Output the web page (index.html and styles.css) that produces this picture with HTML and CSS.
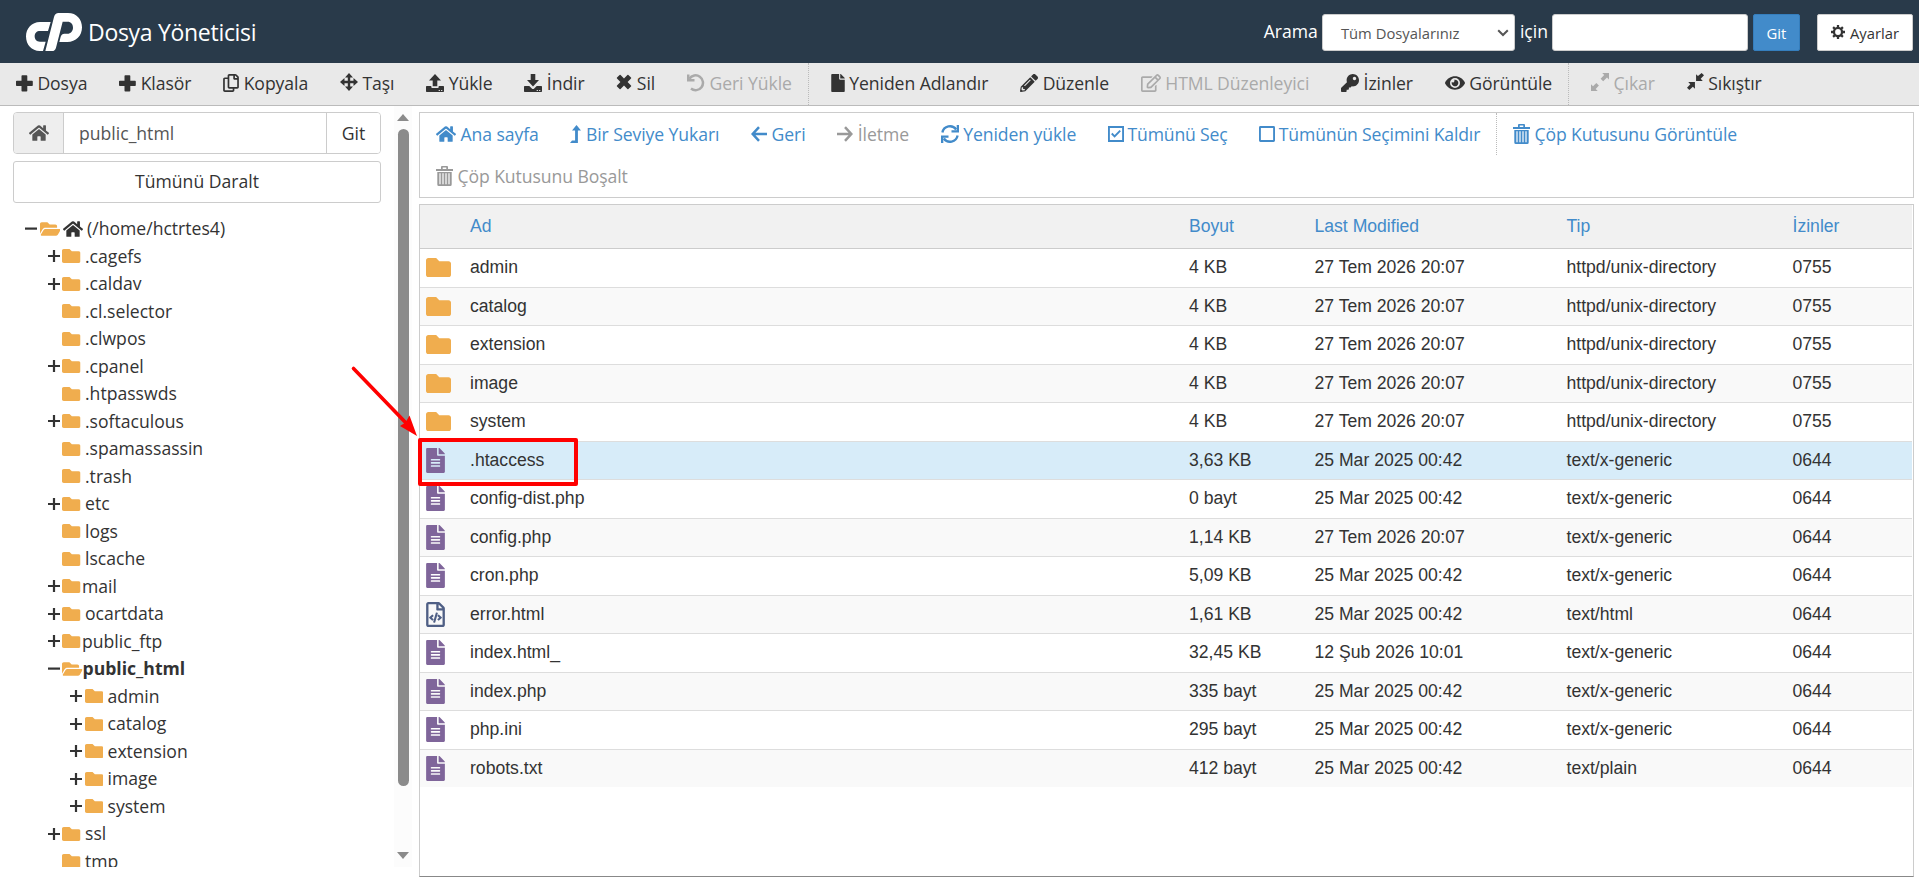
FILE: index.html
```html
<!DOCTYPE html>
<html lang="tr">
<head>
    <meta charset="UTF-8">
    <meta name="viewport" content="width=device-width, initial-scale=1.0">
    <title>Dosya Yöneticisi</title>
    <link rel="stylesheet" href="styles.css">
</head>
<body>

    <!-- Icon set -->
    <svg class="icon-set" width="0" height="0">
        <symbol id="plus" viewBox="0 0 17 17"><path d="M5.5 1q0-.8.8-.8h4.200q.8 0 .8.8v4.700h4.700q.8 0 .8.8v3.700q0 .8-.8.8h-4.700v4.700q0 .8-.8.8H6.300q-.8 0-.8-.8V11H.8q-.8 0-.8-.8V6.500q0-.8.8-.8h4.700z"/></symbol>
        <symbol id="copy" viewBox="0 0 448 512"><path d="M433.941 65.941l-51.882-51.882A48 48 0 0 0 348.118 0H176c-26.51 0-48 21.49-48 48v48H48c-26.51 0-48 21.49-48 48v320c0 26.51 21.49 48 48 48h224c26.51 0 48-21.49 48-48v-48h80c26.51 0 48-21.49 48-48V99.882a48 48 0 0 0-14.059-33.941zM266 464H54a6 6 0 0 1-6-6V150a6 6 0 0 1 6-6h74v224c0 26.510 21.490 48 48 48h96v42a6 6 0 0 1-6 6zm128-96H182a6 6 0 0 1-6-6V54a6 6 0 0 1 6-6h106v88c0 13.255 10.745 24 24 24h88v202a6 6 0 0 1-6 6zm6-256h-64V48h9.632c1.591 0 3.117.632 4.243 1.757l48.368 48.368a6 6 0 0 1 1.757 4.243V112z"/></symbol>
        <symbol id="move" viewBox="0 0 18 18"><path d="M9 0l4 4.500h-2.800v3.300h3.300V5L18 9l-4.500 4v-2.800h-3.300v3.300H13L9 18l-4-4.500h2.800v-3.300H4.500V13L0 9l4.500-4v2.800h3.300V4.500H5z"/></symbol>
        <symbol id="upload" viewBox="0 0 18 18"><path d="M9 0l6 6.500h-3.700v5.800H6.700V6.500H3zM.7 12h4.600v1q0 1 1 1h5.400q1 0 1-1v-1h4.600q.7 0 .7.7v4.600q0 .7-.7.7H.7q-.7 0-.7-.7v-4.600q0-.7.7-.7zm12 4v1.100h1.200V16zm2.400 0v1.100h1.200V16z" fill-rule="evenodd"/></symbol>
        <symbol id="download" viewBox="0 0 18 18"><path d="M6.700 0h4.600v6H15l-6 6.500L3 6h3.700zM.7 12h4.600l2.500 2.500q1.200 1 2.400 0l2.500-2.500h4.600q.7 0 .7.7v4.600q0 .7-.7.7H.7q-.7 0-.7-.7v-4.600q0-.7.7-.7zm12 4v1.100h1.200V16zm2.400 0v1.100h1.200V16z" fill-rule="evenodd"/></symbol>
        <symbol id="times" viewBox="0 0 16 16"><path d="M1 3.600L3.600 1q.5-.5 1 0L8 4.400 11.400 1q.5-.5 1 0L15 3.600q.5.500 0 1L11.600 8l3.400 3.400q.5.500 0 1L12.400 15q-.5.500-1 0L8 11.600 4.600 15q-.5.500-1 0L1 12.400q-.5-.5 0-1L4.400 8 1 4.600q-.5-.5 0-1z"/></symbol>
        <symbol id="undo" viewBox="0 0 18 18"><path d="M2.400 4.700A7.400 7.400 0 1 1 4 14.600" fill="none" stroke="currentColor" stroke-width="2.500"/><path d="M0 .5h2.500V5h5v2.500H0z"/></symbol>
        <symbol id="file" viewBox="0 0 384 512"><path d="M224 136V0H24C10.700 0 0 10.700 0 24v464c0 13.300 10.700 24 24 24h336c13.300 0 24-10.700 24-24V160H248c-13.200 0-24-10.800-24-24zm160-14.100v6.100H256V0h6.100c6.400 0 12.500 2.500 17 7l97.900 98c4.500 4.500 7 10.600 7 16.900z"/></symbol>
        <symbol id="pencil" viewBox="0 0 512 512"><path d="M497.900 142.100l-46.100 46.100c-4.700 4.700-12.300 4.700-17 0l-111-111c-4.700-4.700-4.700-12.300 0-17l46.100-46.100c18.700-18.700 49.100-18.700 67.900 0l60.100 60.100c18.800 18.700 18.800 49.100 0 67.900zM284.200 99.800L21.600 362.400.4 483.900c-2.900 16.400 11.400 30.600 27.800 27.800l121.500-21.300 262.600-262.600c4.700-4.700 4.700-12.300 0-17l-111-111c-4.800-4.700-12.400-4.700-17.100 0zM124.100 339.900c-5.500-5.500-5.500-14.300 0-19.800l154-154c5.500-5.500 14.300-5.500 19.800 0s5.500 14.300 0 19.800l-154 154c-5.500 5.500-14.300 5.500-19.800 0zM88 424h48v36.300l-64.500 11.300-31.100-31.100L51.700 376H88v48z"/></symbol>
        <symbol id="edit" viewBox="0 0 576 512"><path d="M402.300 344.900l32-32c5-5 13.700-1.500 13.700 5.700V464c0 26.500-21.500 48-48 48H48c-26.500 0-48-21.500-48-48V112c0-26.500 21.500-48 48-48h273.500c7.100 0 10.700 8.600 5.700 13.700l-32 32c-1.500 1.500-3.500 2.300-5.700 2.300H48v352h352V350.500c0-2.100.8-4.100 2.300-5.600zm156.600-201.800L296.300 405.700l-90.400 10c-26.200 2.900-48.500-19.200-45.600-45.600l10-90.400L432.900 17.100c22.900-22.900 59.900-22.900 82.700 0l43.200 43.200c22.900 22.900 22.900 60 .1 82.800zM460.100 174L402 115.900 216.200 301.800l-7.300 65.300 65.300-7.300L460.100 174zm64.800-79.700l-43.200-43.200c-4.100-4.100-10.800-4.100-14.800 0L436 82l58.100 58.100 30.900-30.900c4-4.200 4-10.800-.1-14.900z"/></symbol>
        <symbol id="key" viewBox="0 0 512 512"><path d="M512 176C512 273.200 433.200 352 336 352c-11.200 0-22.200-1-32.800-3l-24 27a24 24 0 0 1-18 8H224v40c0 13.300-10.700 24-24 24h-40v40c0 13.300-10.700 24-24 24H24c-13.300 0-24-10.700-24-24v-78c0-6.400 2.500-12.500 7-17l161.800-161.800C163.100 213.800 160 195.300 160 176 160 78.800 238.800 0 336 0c97.500 0 176 78.500 176 176zM336 128c0 26.500 21.500 48 48 48s48-21.500 48-48-21.500-48-48-48-48 21.500-48 48z"/></symbol>
        <symbol id="eye" viewBox="0 0 576 512"><path d="M572.520 241.400C518.290 135.590 410.930 64 288 64S57.680 135.640 3.480 241.410a32.350 32.350 0 0 0 0 29.190C57.710 376.410 165.070 448 288 448s230.320-71.640 284.520-177.410a32.350 32.350 0 0 0 0-29.190zM288 400a144 144 0 1 1 144-144 143.930 143.930 0 0 1-144 144zm0-240a95.310 95.310 0 0 0-25.310 3.790 47.850 47.850 0 0 1-66.900 66.900A95.780 95.780 0 1 0 288 160z"/></symbol>
        <symbol id="expand" viewBox="0 0 18 18"><path d="M11.200 0H18v6.500l-2-2-3.800 3.700-2.600-2.500L13.200 2zM0 11.300l2 2L5.300 10l2.600 2.600L4.700 16l2 2H0z"/></symbol>
        <symbol id="compress" viewBox="0 0 18 18"><path d="M9.600 1.300l2 2L15.500 0 18 2.500l-3.500 3.500 2.200 2.400H9.600zM1.300 9.600h7.100v7.100l-2.200-2.200L2.500 18 0 15.500l3.500-3.700z"/></symbol>
        <symbol id="home" viewBox="0 0 576 512"><path d="M280.370 148.260L96 300.110V464a16 16 0 0 0 16 16l112.060-.29a16 16 0 0 0 15.920-16V368a16 16 0 0 1 16-16h64a16 16 0 0 1 16 16v95.640a16 16 0 0 0 16 16.050L464 480a16 16 0 0 0 16-16V300L295.670 148.260a12.190 12.190 0 0 0-15.300 0zM571.600 251.470L488 182.560V44.050a12 12 0 0 0-12-12h-56a12 12 0 0 0-12 12v72.610L318.470 43a48 48 0 0 0-61 0L4.340 251.470a12 12 0 0 0-1.600 16.900l25.500 31A12 12 0 0 0 45.150 301l235.220-193.740a12.190 12.190 0 0 1 15.300 0L530.900 301a12 12 0 0 0 16.900-1.600l25.500-31a12 12 0 0 0-1.700-16.930z"/></symbol>
        <symbol id="up" viewBox="0 0 11 18"><path d="M6.500 0L11 5.600H7.900V18H0l2-2.600h3.100V5.600H2z"/></symbol>
        <symbol id="left" viewBox="0 0 16 16"><path d="M8 1.200L1.700 8 8 14.800M2 8h14" fill="none" stroke="currentColor" stroke-width="2.500"/></symbol>
        <symbol id="right" viewBox="0 0 16 16"><path d="M8 1.200L14.300 8 8 14.800M14 8H0" fill="none" stroke="currentColor" stroke-width="2.500"/></symbol>
        <symbol id="sync" viewBox="0 0 18 18"><path d="M1.400 7.500a7.700 7.700 0 0 1 13.800-3M16.600 10.500a7.700 7.700 0 0 1-13.800 3" fill="none" stroke="currentColor" stroke-width="2.300"/><path d="M18 0v7.500h-7.500V5.300h5.200V0zM0 18v-7.500h7.500v2.200H2.300V18z"/></symbol>
        <symbol id="checked" viewBox="0 0 17 17"><path d="M1 1h15v15H1zM4 8l3 3 6-6" fill="none" stroke="currentColor" stroke-width="2"/></symbol>
        <symbol id="unchecked" viewBox="0 0 17 17"><rect x="1" y="1" width="15" height="15" rx=".5" fill="none" stroke="currentColor" stroke-width="2"/></symbol>
        <symbol id="trash" viewBox="0 0 17 20"><path d="M0 3h17v2H0zM5 3V1q0-1 1-1h5q1 0 1 1v2h-1.700V1.500H6.700V3zM1.300 6h14.400v12.500q0 1.500-1.500 1.500H2.800q-1.500 0-1.500-1.500zm2.100 1.300v11h1.200v-11zm3 0v11h1.200v-11zm3 0v11h1.200v-11zm3 0v11h1.200v-11z" fill-rule="evenodd"/></symbol>
        <symbol id="cog" viewBox="0 0 16 16"><circle cx="8" cy="8" r="4.600" fill="none" stroke="currentColor" stroke-width="2.600"/><path d="M6.700 0h2.600v3H6.700zM6.700 13h2.600v3H6.700zM0 6.700h3v2.600H0zM13 6.700h3v2.600h-3zM1.500 3.300l1.800-1.800 2.200 2.200-1.800 1.800zM10.500 12.300l1.800-1.800 2.200 2.200-1.800 1.800zM12.700 1.500l1.800 1.800-2.200 2.200-1.800-1.800zM3.700 10.500l1.800 1.800-2.200 2.200-1.800-1.800z"/></symbol>
        <symbol id="folder" viewBox="0 64 512 384" preserveAspectRatio="none"><path d="M464 128H272l-64-64H48C21.490 64 0 85.490 0 112v288c0 26.510 21.490 48 48 48h416c26.510 0 48-21.490 48-48V176c0-26.510-21.490-48-48-48z"/></symbol>
        <symbol id="folder-open" viewBox="0 64 576 384"><path d="M572.694 292.093L500.270 416.248A63.997 63.997 0 0 1 444.989 448H45.025c-18.523 0-30.064-20.093-20.731-36.093l72.424-124.155A64 64 0 0 1 152 256h399.964c18.523 0 30.064 20.093 20.730 36.093zM152 224h328v-48c0-26.510-21.490-48-48-48H272l-64-64H48C21.490 64 0 85.490 0 112v278.046l69.077-118.418C86.214 242.250 117.989 224 152 224z"/></symbol>
        <symbol id="file-text" viewBox="0 0 384 512"><path d="M224 136V0H24C10.700 0 0 10.700 0 24v464c0 13.300 10.700 24 24 24h336c13.300 0 24-10.700 24-24V160H248c-13.200 0-24-10.800-24-24zm64 236c0 6.600-5.400 12-12 12H108c-6.600 0-12-5.400-12-12v-8c0-6.600 5.400-12 12-12h168c6.600 0 12 5.400 12 12v8zm0-64c0 6.600-5.400 12-12 12H108c-6.600 0-12-5.400-12-12v-8c0-6.600 5.400-12 12-12h168c6.600 0 12 5.400 12 12v8zm0-72v8c0 6.600-5.400 12-12 12H108c-6.600 0-12-5.400-12-12v-8c0-6.600 5.400-12 12-12h168c6.600 0 12 5.400 12 12zm96-114.100v6.100H256V0h6.100c6.400 0 12.500 2.500 17 7l97.900 98c4.500 4.500 7 10.600 7 16.900z"/></symbol>
        <symbol id="file-code" viewBox="0 0 384 512"><path d="M149.900 349.100l-.2-.2-32.800-28.900 32.800-28.900c3.600-3.200 4-8.800.8-12.400l-.2-.2-17.400-18.600c-3.400-3.600-9-3.700-12.400-.4l-57.700 54.100c-3.700 3.500-3.700 9.400 0 12.800l57.700 54.100c1.600 1.500 3.800 2.400 6 2.400 2.400 0 4.800-1 6.400-2.800l17.400-18.600c3.300-3.500 3.100-9.100-.4-12.400zm220-251.200L286 14C277 5 264.800-.1 252.100-.1H48C21.500 0 0 21.500 0 48v416c0 26.500 21.500 48 48 48h288c26.500 0 48-21.500 48-48V131.900c0-12.700-5.100-25-14.100-34zM256 51.900l76.100 76.100H256zM336 464H48V48h160v104c0 13.300 10.700 24 24 24h104zM209.600 214c-4.700-1.400-9.500 1.300-10.900 6L144 408.100c-1.400 4.700 1.300 9.600 6 10.900l24.400 7.100c4.700 1.400 9.600-1.400 10.900-6L240 231.900c1.400-4.700-1.300-9.600-6-10.900zm24.500 76.900l.2.2 32.800 28.900-32.800 28.900c-3.600 3.200-4 8.800-.8 12.400l.2.2 17.400 18.600c3.300 3.500 8.900 3.700 12.400.4l57.700-54.100c3.700-3.500 3.700-9.400 0-12.800l-57.700-54.100c-3.500-3.300-9.100-3.200-12.400.4l-17.400 18.600c-3.300 3.500-3.100 9.100.4 12.400z"/></symbol>
        <symbol id="chevron" viewBox="0 0 12 8"><path d="M1.200 1.200L6 6l4.800-4.800" fill="none" stroke="currentColor" stroke-width="2"/></symbol>
        <symbol id="tree-plus" viewBox="0 0 12 12"><path d="M4.900 0h2.200v4.900H12v2.200H7.100V12H4.900V7.100H0V4.900h4.900z"/></symbol>
        <symbol id="tree-minus" viewBox="0 0 12 12"><path d="M0 4.500h12v2.200H0z"/></symbol>
    </svg>

    <!-- Header -->
    <header class="header">
        <svg class="logo" viewBox="78 39 168 114"><path d="M152 66H120C95 66 78 86 78 109c0 26 17 44 41 44h10l8-28h-17c-11 0-16-7-16-16 0-10 6-16 16-16h24zM136 153l26-102q3-12 14-12h28c26 0 42 19 42 43 0 26-18 44-44 44h-24l4-16q3-9 11-9h9c10 0 17-8 17-18 0-11-6-18-16-18h-15l-20 78q-3 10-12 10z"/></svg>
        <h1 class="title">Dosya Yöneticisi</h1>
        <div class="search">
            <span class="search-label">Arama</span>
            <div class="select"><span>Tüm Dosyalarınız</span><svg class="chevron"><use href="#chevron"/></svg></div>
            <span class="search-label">için</span>
            <input class="search-input" type="text">
            <button class="search-btn">Git</button>
            <button class="settings-btn"><svg class="cog"><use href="#cog"/></svg>Ayarlar</button>
        </div>
    </header>

    <!-- Main actions -->
    <nav class="toolbar">
        <a class="tool"><svg class="w17"><use href="#plus"/></svg>Dosya</a>
        <a class="tool"><svg class="w17"><use href="#plus"/></svg>Klasör</a>
        <a class="tool"><svg class="w16"><use href="#copy"/></svg>Kopyala</a>
        <a class="tool"><svg class="w18 raised"><use href="#move"/></svg>Taşı</a>
        <a class="tool"><svg class="w18"><use href="#upload"/></svg>Yükle</a>
        <a class="tool"><svg class="w18"><use href="#download"/></svg>İndir</a>
        <a class="tool"><svg class="w16 raised"><use href="#times"/></svg>Sil</a>
        <a class="tool disabled"><svg class="w18"><use href="#undo"/></svg>Geri Yükle</a>
        <a class="tool split"><svg class="w14"><use href="#file"/></svg>Yeniden Adlandır</a>
        <a class="tool"><svg class="w18"><use href="#pencil"/></svg>Düzenle</a>
        <a class="tool disabled"><svg class="w20"><use href="#edit"/></svg>HTML Düzenleyici</a>
        <a class="tool"><svg class="w18"><use href="#key"/></svg>İzinler</a>
        <a class="tool"><svg class="w20"><use href="#eye"/></svg>Görüntüle</a>
        <a class="tool split disabled"><svg class="w18 raised"><use href="#expand"/></svg>Çıkar</a>
        <a class="tool"><svg class="w17 raised"><use href="#compress"/></svg>Sıkıştır</a>
    </nav>

    <main class="content">

        <!-- Folder tree -->
        <aside class="sidebar">
            <div class="sidebar-body">
                <div class="path-form">
                    <span class="path-home"><svg class="w20"><use href="#home"/></svg></span>
                    <input class="path-input" type="text" value="public_html">
                    <button class="path-btn">Git</button>
                </div>
                <button class="collapse-btn">Tümünü Daralt</button>
                <ul class="tree">
                    <li class="root"><svg class="toggle"><use href="#tree-minus"/></svg><svg class="open"><use href="#folder-open"/></svg><svg class="tree-home"><use href="#home"/></svg>(/home/hctrtes4)</li>
                    <li><svg class="toggle"><use href="#tree-plus"/></svg><svg class="closed"><use href="#folder"/></svg>.cagefs</li>
                    <li><svg class="toggle"><use href="#tree-plus"/></svg><svg class="closed"><use href="#folder"/></svg>.caldav</li>
                    <li><svg class="toggle"></svg><svg class="closed"><use href="#folder"/></svg>.cl.selector</li>
                    <li><svg class="toggle"></svg><svg class="closed"><use href="#folder"/></svg>.clwpos</li>
                    <li><svg class="toggle"><use href="#tree-plus"/></svg><svg class="closed"><use href="#folder"/></svg>.cpanel</li>
                    <li><svg class="toggle"></svg><svg class="closed"><use href="#folder"/></svg>.htpasswds</li>
                    <li><svg class="toggle"><use href="#tree-plus"/></svg><svg class="closed"><use href="#folder"/></svg>.softaculous</li>
                    <li><svg class="toggle"></svg><svg class="closed"><use href="#folder"/></svg>.spamassassin</li>
                    <li><svg class="toggle"></svg><svg class="closed"><use href="#folder"/></svg>.trash</li>
                    <li><svg class="toggle"><use href="#tree-plus"/></svg><svg class="closed"><use href="#folder"/></svg>etc</li>
                    <li><svg class="toggle"></svg><svg class="closed"><use href="#folder"/></svg>logs</li>
                    <li><svg class="toggle"></svg><svg class="closed"><use href="#folder"/></svg>lscache</li>
                    <li class="tight"><svg class="toggle"><use href="#tree-plus"/></svg><svg class="closed"><use href="#folder"/></svg>mail</li>
                    <li><svg class="toggle"><use href="#tree-plus"/></svg><svg class="closed"><use href="#folder"/></svg>ocartdata</li>
                    <li class="tight"><svg class="toggle"><use href="#tree-plus"/></svg><svg class="closed"><use href="#folder"/></svg>public_ftp</li>
                    <li class="current"><svg class="toggle"><use href="#tree-minus"/></svg><svg class="open"><use href="#folder-open"/></svg>public_html</li>
                    <li class="child"><svg class="toggle"><use href="#tree-plus"/></svg><svg class="closed"><use href="#folder"/></svg>admin</li>
                    <li class="child"><svg class="toggle"><use href="#tree-plus"/></svg><svg class="closed"><use href="#folder"/></svg>catalog</li>
                    <li class="child"><svg class="toggle"><use href="#tree-plus"/></svg><svg class="closed"><use href="#folder"/></svg>extension</li>
                    <li class="child"><svg class="toggle"><use href="#tree-plus"/></svg><svg class="closed"><use href="#folder"/></svg>image</li>
                    <li class="child"><svg class="toggle"><use href="#tree-plus"/></svg><svg class="closed"><use href="#folder"/></svg>system</li>
                    <li><svg class="toggle"><use href="#tree-plus"/></svg><svg class="closed"><use href="#folder"/></svg>ssl</li>
                    <li><svg class="toggle"></svg><svg class="closed"><use href="#folder"/></svg>tmp</li>
                </ul>
            </div>
            <div class="scrollbar">
                <span class="scroll-up"></span>
                <span class="scroll-thumb"></span>
                <span class="scroll-down"></span>
            </div>
        </aside>

        <section class="files">
            <!-- Navigation actions -->
            <nav class="actions">
                <a class="action"><svg class="w20"><use href="#home"/></svg>Ana sayfa</a>
                <a class="action"><svg class="w11"><use href="#up"/></svg>Bir Seviye Yukarı</a>
                <a class="action"><svg class="w16"><use href="#left"/></svg>Geri</a>
                <a class="action disabled"><svg class="w16"><use href="#right"/></svg>İletme</a>
                <a class="action"><svg class="w18"><use href="#sync"/></svg>Yeniden yükle</a>
                <a class="action check"><svg class="w16"><use href="#checked"/></svg>Tümünü Seç</a>
                <a class="action check"><svg class="w16"><use href="#unchecked"/></svg>Tümünün Seçimini Kaldır</a>
                <a class="action split"><svg class="trash"><use href="#trash"/></svg>Çöp Kutusunu Görüntüle</a>
                <a class="action disabled"><svg class="trash"><use href="#trash"/></svg>Çöp Kutusunu Boşalt</a>
            </nav>

            <!-- File list -->
            <div class="table">
                <div class="row head"><span></span><span>Ad</span><span>Boyut</span><span>Last Modified</span><span>Tip</span><span>İzinler</span></div>
                <div class="row"><svg class="dir"><use href="#folder"/></svg><span>admin</span><span>4 KB</span><span>27 Tem 2026 20:07</span><span>httpd/unix-directory</span><span>0755</span></div>
                <div class="row"><svg class="dir"><use href="#folder"/></svg><span>catalog</span><span>4 KB</span><span>27 Tem 2026 20:07</span><span>httpd/unix-directory</span><span>0755</span></div>
                <div class="row"><svg class="dir"><use href="#folder"/></svg><span>extension</span><span>4 KB</span><span>27 Tem 2026 20:07</span><span>httpd/unix-directory</span><span>0755</span></div>
                <div class="row"><svg class="dir"><use href="#folder"/></svg><span>image</span><span>4 KB</span><span>27 Tem 2026 20:07</span><span>httpd/unix-directory</span><span>0755</span></div>
                <div class="row"><svg class="dir"><use href="#folder"/></svg><span>system</span><span>4 KB</span><span>27 Tem 2026 20:07</span><span>httpd/unix-directory</span><span>0755</span></div>
                <div class="row selected"><svg class="doc"><use href="#file-text"/></svg><span>.htaccess</span><span>3,63 KB</span><span>25 Mar 2025 00:42</span><span>text/x-generic</span><span>0644</span></div>
                <div class="row"><svg class="doc"><use href="#file-text"/></svg><span>config-dist.php</span><span>0 bayt</span><span>25 Mar 2025 00:42</span><span>text/x-generic</span><span>0644</span></div>
                <div class="row"><svg class="doc"><use href="#file-text"/></svg><span>config.php</span><span>1,14 KB</span><span>27 Tem 2026 20:07</span><span>text/x-generic</span><span>0644</span></div>
                <div class="row"><svg class="doc"><use href="#file-text"/></svg><span>cron.php</span><span>5,09 KB</span><span>25 Mar 2025 00:42</span><span>text/x-generic</span><span>0644</span></div>
                <div class="row"><svg class="doc code"><use href="#file-code"/></svg><span>error.html</span><span>1,61 KB</span><span>25 Mar 2025 00:42</span><span>text/html</span><span>0644</span></div>
                <div class="row"><svg class="doc"><use href="#file-text"/></svg><span>index.html_</span><span>32,45 KB</span><span>12 Şub 2026 10:01</span><span>text/x-generic</span><span>0644</span></div>
                <div class="row"><svg class="doc"><use href="#file-text"/></svg><span>index.php</span><span>335 bayt</span><span>25 Mar 2025 00:42</span><span>text/x-generic</span><span>0644</span></div>
                <div class="row"><svg class="doc"><use href="#file-text"/></svg><span>php.ini</span><span>295 bayt</span><span>25 Mar 2025 00:42</span><span>text/x-generic</span><span>0644</span></div>
                <div class="row"><svg class="doc"><use href="#file-text"/></svg><span>robots.txt</span><span>412 bayt</span><span>25 Mar 2025 00:42</span><span>text/plain</span><span>0644</span></div>
            </div>
        </section>
    </main>

    <!-- Highlight over the selected file -->
    <div class="marker"></div>
    <svg class="marker-arrow" viewBox="0 0 70 74"><path d="M3.500 3.500L57 59" stroke="#f00" stroke-width="3.600" stroke-linecap="round"/><path d="M67 71L50 61 55.500 57.500l4-7z" fill="#f00"/></svg>

</body>
</html>
```
FILE: styles.css
```css
* {
    box-sizing: border-box;
}

body {
    margin: 0;
    height: 877px;
    display: flex;
    flex-direction: column;
    overflow: hidden;
    background: #fff;
    color: #333;
    font-family: "Open Sans", sans-serif;
    font-size: 17.6px;
}

svg {
    flex: none;
    fill: currentColor;
}

button,
input {
    font-family: inherit;
    padding: 0;
}

.icon-set {
    position: absolute;
}

/* Icon widths */
.w11 { width: 11px; height: 18px; }
.w14 { width: 14px; height: 18px; }
.w16 { width: 16px; height: 18px; }
.w17 { width: 17px; height: 17px; }
.w18 { width: 18px; height: 18px; }
.w20 { width: 20px; height: 18px; }
.trash { width: 17px; height: 20px; }

.raised {
    margin-bottom: 3px;
}

/* Header */
.header {
    height: 63px;
    flex: none;
    display: flex;
    align-items: center;
    padding: 0 6px 0 26px;
    background: #293a4a;
    color: #fff;
}

.logo {
    width: 56px;
    height: 38px;
}

.title {
    margin: 0 0 0 6px;
    font-size: 23px;
    font-weight: 400;
    letter-spacing: -0.3px;
    line-height: 38px;
}

.search {
    margin-left: auto;
    display: flex;
    align-items: center;
    padding-top: 2px;
}

.search-label {
    margin: 0 4px 3px 5px;
}

.select {
    width: 193px;
    height: 37px;
    display: flex;
    align-items: center;
    justify-content: space-between;
    padding: 0 5px 0 18px;
    border: 1px solid #ccc;
    border-radius: 3px;
    background: #fff;
    color: #555;
    font-size: 14.8px;
}

.chevron {
    width: 12px;
    height: 8px;
}

.search-input {
    width: 196px;
    height: 37px;
    border: 1px solid #ccc;
    border-radius: 3px;
}

.search-btn {
    width: 47px;
    height: 37px;
    margin-left: 5px;
    border: 1px solid #357ebd;
    border-radius: 2px;
    background: #428bca;
    color: #fff;
    font-size: 14.8px;
}

.settings-btn {
    width: 96px;
    height: 37px;
    display: flex;
    align-items: center;
    justify-content: center;
    margin-left: 17px;
    border: 1px solid #ccc;
    border-radius: 2px;
    background: #fff;
    color: #333;
    font-size: 14.8px;
}

.cog {
    width: 14px;
    height: 14px;
    margin: 0 5px 1px 0;
}

/* Main toolbar */
.toolbar {
    height: 43px;
    flex: none;
    display: flex;
    background: #e9e9e9;
    border-bottom: 1px solid #bbb;
    letter-spacing: -0.07px;
}

.tool {
    display: flex;
    align-items: center;
    gap: 4.5px;
    padding: 0 15.9px 2px;
}

.tool.disabled {
    color: #aaa;
}

.tool.split {
    padding-left: 22px;
    border-left: 1px dotted #bbb;
}

.content {
    flex: 1;
    min-height: 0;
    display: flex;
}

/* Sidebar */
.sidebar {
    width: 419px;
    height: 761px;
    flex: none;
    display: flex;
    overflow: hidden;
}

.sidebar-body {
    width: 394px;
    padding: 6px 13px 0;
}

.path-form {
    height: 42px;
    display: flex;
    border: 1px solid #ccc;
    border-radius: 4px;
    overflow: hidden;
}

.path-home {
    width: 49px;
    display: flex;
    align-items: center;
    justify-content: center;
    background: #eee;
    color: #555;
}

.path-input {
    flex: 1;
    min-width: 0;
    border: 1px solid #ccc;
    border-width: 0 1px;
    padding-left: 15px;
    color: #555;
    font-size: 17.6px;
}

.path-btn {
    width: 53px;
    border: 0;
    background: #fff;
    color: #333;
    font-size: 17.6px;
}

.collapse-btn {
    width: 100%;
    height: 42px;
    margin-top: 7px;
    padding-bottom: 2px;
    border: 1px solid #ccc;
    border-radius: 3px;
    background: #fff;
    color: #333;
    font-size: 17.6px;
}

.tree {
    margin: 12px 0 0;
    padding: 0;
    list-style: none;
}

.tree li {
    height: 27.5px;
    display: flex;
    align-items: center;
    padding-left: 34.5px;
    line-height: 27.5px;
    white-space: nowrap;
}

.tree .root {
    padding-left: 12px;
}

.tree .child {
    padding-left: 57px;
}

.tree .current {
    font-weight: 700;
}

.toggle {
    width: 12px;
    height: 12px;
    margin-right: 2.5px;
}

.closed {
    width: 18.5px;
    height: 14px;
    margin-right: 4.5px;
    color: #f0ad4e;
}

.tight .closed {
    margin-right: 1.5px;
}

.open {
    width: 20.5px;
    height: 14px;
    color: #f0ad4e;
}

.tree-home {
    width: 20px;
    height: 18px;
    margin: 0 4px 0 3px;
}

/* Sidebar scrollbar */
.scrollbar {
    width: 18px;
    display: flex;
    flex-direction: column;
    align-items: center;
    padding: 8px 0;
    background: #fcfcfc;
}

.scroll-up,
.scroll-down {
    border: 6.5px solid transparent;
}

.scroll-up {
    border-top: 0;
    border-bottom: 7px solid #8b8b8b;
}

.scroll-down {
    margin-top: auto;
    border-bottom: 0;
    border-top: 7px solid #8b8b8b;
}

.scroll-thumb {
    width: 11px;
    height: 657px;
    margin-top: 8px;
    border-radius: 6px;
    background: #8b8b8b;
}

/* Right side */
.files {
    width: 1495px;
    display: flex;
    flex-direction: column;
    gap: 6px;
    padding-top: 6px;
}

.actions {
    height: 86px;
    flex: none;
    display: flex;
    flex-wrap: wrap;
    align-content: flex-start;
    border: 1px solid #ccc;
    color: #428bca;
    letter-spacing: -0.08px;
}

.action {
    height: 42px;
    display: flex;
    align-items: center;
    gap: 4.5px;
    padding: 0 15.7px 1px 16px;
}

.action.check {
    gap: 3.5px;
    letter-spacing: -0.15px;
}

.action.disabled {
    color: #999;
}

.action.split {
    border-left: 1px dotted #bbb;
}

/* File table */
.table {
    flex: 1;
    min-height: 0;
    padding-right: 1px;
    border: 1px solid #ccc;
    border-bottom-color: #888;
    font-family: "Liberation Sans", Arial, sans-serif;
}

.row {
    height: 38.5px;
    display: grid;
    grid-template-columns: 44px 719px 125.5px 252px 226px 1fr;
    align-items: center;
    padding-left: 6px;
    border-top: 1px solid #ddd;
}

.row:nth-child(odd) {
    background: #f9f9f9;
}

.row.head {
    height: 43px;
    border-top: 0;
    background: #f1f1f1;
    color: #428bca;
}

.row.head + .row {
    border-top-color: #ccc;
}

.row.selected {
    background: #d7ecf9;
}

.dir {
    width: 25px;
    height: 19px;
    color: #f0ad4e;
}

.doc {
    width: 19px;
    height: 25px;
    color: #7f659a;
}

.doc.code {
    color: #4f5f85;
}

/* Highlight */
.marker {
    position: absolute;
    left: 418px;
    top: 438px;
    width: 160px;
    height: 48px;
    border: 4px solid #f00;
    border-radius: 2px;
}

.marker-arrow {
    position: absolute;
    left: 350px;
    top: 365px;
    width: 70px;
    height: 74px;
}
```
